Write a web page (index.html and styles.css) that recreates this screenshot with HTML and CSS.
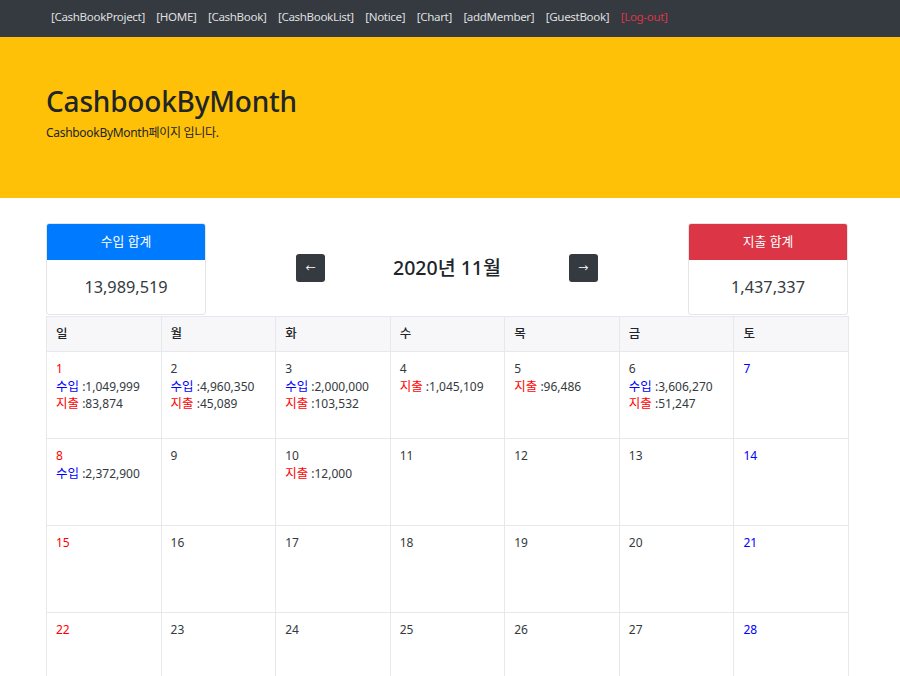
FILE: index.html
```html
<!DOCTYPE html>
<html lang="ko">
<head>
<meta charset="utf-8">
<title>CashbookByMonth</title>
<link rel="stylesheet" href="styles.css">
</head>
<body>
<nav class="navbar">
  <a class="nav-link" href="#">[CashBookProject]</a>
  <a class="nav-link" href="#">[HOME]</a>
  <a class="nav-link" href="#">[CashBook]</a>
  <a class="nav-link" href="#">[CashBookList]</a>
  <a class="nav-link" href="#">[Notice]</a>
  <a class="nav-link" href="#">[Chart]</a>
  <a class="nav-link" href="#">[addMember]</a>
  <a class="nav-link" href="#">[GuestBook]</a>
  <a class="nav-link logout" href="#">[Log-out]</a>
</nav>
<header class="jumbotron">
  <h1 class="title">CashbookByMonth</h1>
  <p class="lead">CashbookByMonth페이지 입니다.</p>
</header>
<main class="container">
  <div class="summary">
    <div class="card">
      <div class="card-header income">수입 합계</div>
      <div class="card-body">13,989,519</div>
    </div>
    <div class="month-nav">
      <a class="btn" href="#">←</a>
      <h3 class="month">2020년 11월</h3>
      <a class="btn" href="#">→</a>
    </div>
    <div class="card">
      <div class="card-header expense">지출 합계</div>
      <div class="card-body">1,437,337</div>
    </div>
  </div>
  <table class="calendar">
    <thead>
      <tr><th>일</th><th>월</th><th>화</th><th>수</th><th>목</th><th>금</th><th>토</th></tr>
    </thead>
    <tbody>
      <tr>
        <td><div class="sun">1</div><div><span class="in">수입</span> :1,049,999</div><div><span class="out">지출</span> :83,874</div></td>
        <td><div>2</div><div><span class="in">수입</span> :4,960,350</div><div><span class="out">지출</span> :45,089</div></td>
        <td><div>3</div><div><span class="in">수입</span> :2,000,000</div><div><span class="out">지출</span> :103,532</div></td>
        <td><div>4</div><div><span class="out">지출</span> :1,045,109</div></td>
        <td><div>5</div><div><span class="out">지출</span> :96,486</div></td>
        <td><div>6</div><div><span class="in">수입</span> :3,606,270</div><div><span class="out">지출</span> :51,247</div></td>
        <td><div class="sat">7</div></td>
      </tr>
      <tr>
        <td><div class="sun">8</div><div><span class="in">수입</span> :2,372,900</div></td>
        <td><div>9</div></td>
        <td><div>10</div><div><span class="out">지출</span> :12,000</div></td>
        <td><div>11</div></td>
        <td><div>12</div></td>
        <td><div>13</div></td>
        <td><div class="sat">14</div></td>
      </tr>
      <tr>
        <td><div class="sun">15</div></td>
        <td><div>16</div></td>
        <td><div>17</div></td>
        <td><div>18</div></td>
        <td><div>19</div></td>
        <td><div>20</div></td>
        <td><div class="sat">21</div></td>
      </tr>
      <tr>
        <td><div class="sun">22</div></td>
        <td><div>23</div></td>
        <td><div>24</div></td>
        <td><div>25</div></td>
        <td><div>26</div></td>
        <td><div>27</div></td>
        <td><div class="sat">28</div></td>
      </tr>
    </tbody>
  </table>
</main>
</body>
</html>
```
FILE: styles.css
```css
* { box-sizing: border-box; }
body {
  margin: 0;
  font-family: "Noto Sans", "Noto Sans CJK KR", sans-serif;
  font-size: 12.8px;
  line-height: 1.4;
  color: #212529;
  background: #fff;
}
a { text-decoration: none; }
.navbar {
  background: #343a40;
  height: 37px;
  display: flex;
  align-items: center;
  padding: 0 0 2px 51px;
  gap: 11.5px;
}
.nav-link {
  color: rgba(255,255,255,.85);
  font-size: 11.6px;
  letter-spacing: -0.35px;
}
.nav-link.logout { color: #dc3545; }
.jumbotron {
  background: #ffc107;
  height: 161px;
  padding: 48px 46px 0;
}
.title {
  margin: 0;
  font-size: 28px;
  font-weight: 500;
  line-height: 1.2;
  letter-spacing: -0.2px;
}
.lead {
  margin: 6px 0 0;
  font-size: 12px;
  letter-spacing: -0.3px;
}
.container {
  padding: 25px 52px 0 46px;
}
.summary {
  display: flex;
  align-items: flex-start;
  height: 93px;
}
.card {
  width: 160px;
  border: 1px solid rgba(0,0,0,.1);
  border-radius: 3px;
  overflow: hidden;
}
.card-header {
  height: 36px;
  color: #fff;
  display: flex;
  align-items: center;
  justify-content: center;
  font-size: 12.8px;
}
.card-header.income { background: #007bff; }
.card-header.expense { background: #dc3545; }
.card-body {
  height: 54px;
  display: flex;
  align-items: center;
  justify-content: center;
  font-size: 16.3px;
  color: #343a40;
}
.month-nav {
  flex: 1;
  display: flex;
  align-items: center;
  justify-content: center;
  gap: 68px;
  padding-top: 31px;
}
.btn {
  width: 29px;
  height: 28px;
  background: #343a40;
  color: #fff;
  border-radius: 3px;
  display: flex;
  align-items: center;
  justify-content: center;
  font-size: 10px;
}
.month {
  margin: 0;
  font-size: 19.5px;
  font-weight: 500;
  line-height: 1.2;
}
.calendar {
  width: 803px;
  border-collapse: collapse;
  table-layout: fixed;
}
.calendar th, .calendar td {
  border: 1px solid #e6e8eb;
  text-align: left;
  vertical-align: top;
}
.calendar th {
  background: #f7f7f9;
  height: 35px;
  padding: 0 9px;
  vertical-align: middle;
  font-weight: 500;
  font-size: 12.5px;
}
.calendar td {
  height: 87px;
  padding: 8px 9px 0;
  font-size: 12px;
  line-height: 17.5px;
  color: #343a40;
}
.sun { color: #ff0000; }
.sat { color: #0000ff; }
.in { color: #0000ff; font-size: 12.5px; }
.out { color: #ff0000; font-size: 12.5px; }
```
